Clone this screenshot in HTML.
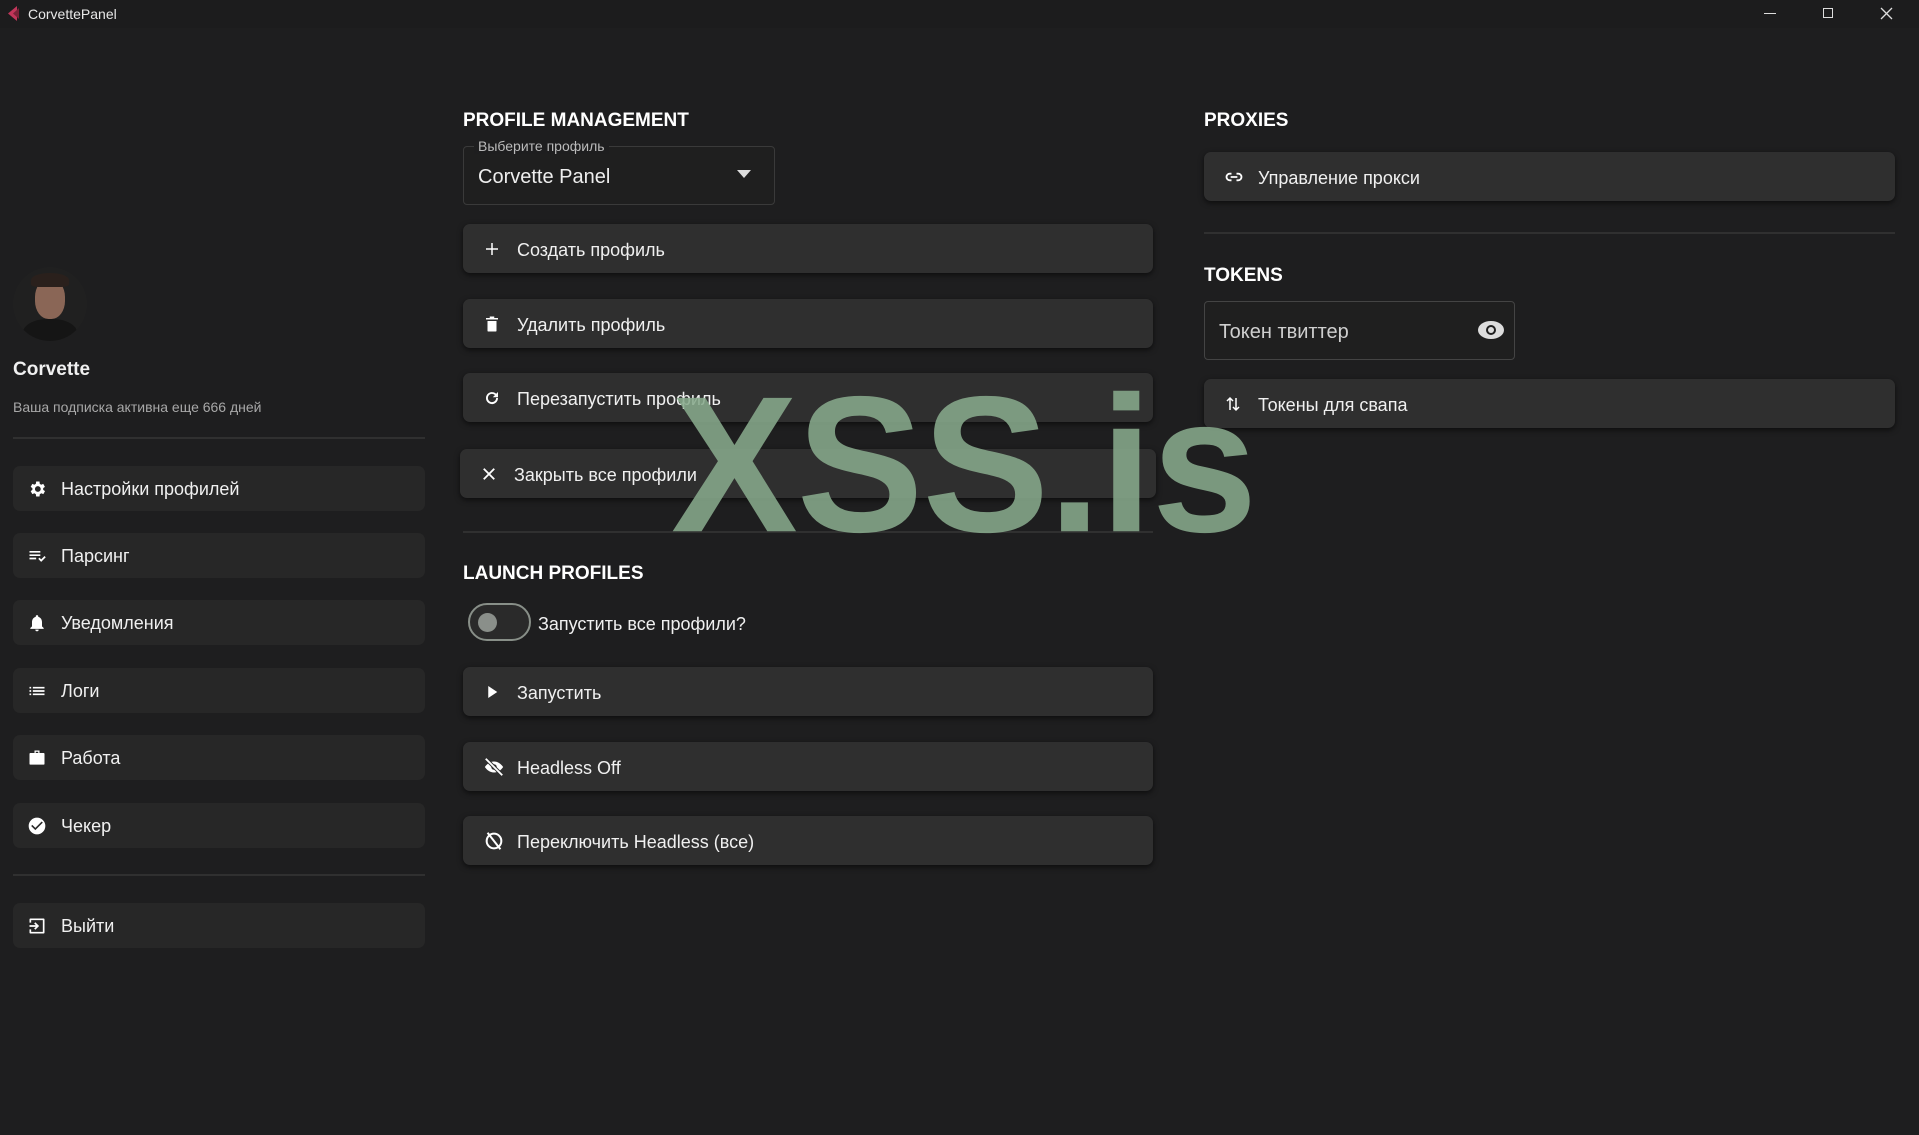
<!DOCTYPE html>
<html><head><meta charset="utf-8"><style>
*{box-sizing:border-box;margin:0;padding:0}
body{width:1919px;height:1135px;background:#1e1e1f;font-family:"Liberation Sans","DejaVu Sans",sans-serif;color:#f0f0f0;position:relative;overflow:hidden}
.tb{position:absolute;left:0;top:0;width:1919px;height:28px;background:#1c1c1d}
.tb .t{position:absolute;left:28px;top:6px;font-size:14px;color:#e8e8e8}
.abs{position:absolute}
.nav{position:absolute;left:13px;width:412px;height:45px;background:#272727;border-radius:7px;font-size:18px;display:flex;align-items:center}
.nav svg{position:absolute;left:14px}
.nav span{position:absolute;left:48px;top:13px}
.btn{position:absolute;height:49px;background:#2f2f2f;border-radius:7px;box-shadow:0 2px 6px rgba(0,0,0,.6);font-size:18px;display:flex;align-items:center}
.btn svg{position:absolute;left:20px}
.btn span{position:absolute;left:54px;top:16px}
.h{position:absolute;font-weight:bold;font-size:19px;color:#fff}
.hr{position:absolute;height:2px;background:#303030}
</style></head><body>
<div class="tb"><svg class="abs" style="left:5px;top:5px" width="16" height="17"><path d="M12 1 L3 8.5 L12 16 Z" fill="#c0365a"/><path d="M14 3 L8 8.5 L14 14 Z" fill="#7a2238"/></svg><div class="t">CorvettePanel</div>
<div class="abs" style="left:1764px;top:13px;width:12px;height:1px;background:#ddd"></div>
<div class="abs" style="left:1823px;top:8px;width:10px;height:10px;border:1px solid #ddd"></div>
<svg class="abs" style="left:1880px;top:7px" width="13" height="13"><path d="M1 1L12 12M12 1L1 12" stroke="#ddd" stroke-width="1.3"/></svg></div>

<!-- sidebar -->
<div class="abs" style="left:13px;top:267px;width:74px;height:74px;border-radius:50%;background:#202020;overflow:hidden">
<div class="abs" style="left:22px;top:12px;width:30px;height:40px;border-radius:45%;background:#8a6656"></div>
<div class="abs" style="left:18px;top:6px;width:38px;height:14px;border-radius:50% 50% 20% 20%;background:#2a201c"></div>
<div class="abs" style="left:10px;top:52px;width:54px;height:30px;border-radius:45%;background:#151515"></div>
</div>
<div class="abs" style="left:13px;top:359px;font-size:19px;font-weight:bold">Corvette</div>
<div class="abs" style="left:13px;top:399px;font-size:14px;color:#a8a8a8">Ваша подписка активна еще 666 дней</div>
<div class="hr" style="left:13px;top:437px;width:412px"></div>
<div class="nav" style="top:466px"><svg width="20" height="20" viewBox="0 0 24 24"><path fill="#fff" d="M19.4 13a7.5 7.5 0 0 0 0-2l2.1-1.6-2-3.5-2.5 1a7 7 0 0 0-1.7-1L15 3h-4l-.4 2.9a7 7 0 0 0-1.7 1l-2.5-1-2 3.5L6.5 11a7.5 7.5 0 0 0 0 2l-2.1 1.6 2 3.5 2.5-1a7 7 0 0 0 1.7 1L11 21h4l.4-2.9a7 7 0 0 0 1.7-1l2.5 1 2-3.5zM13 15.5a3.5 3.5 0 1 1 0-7 3.5 3.5 0 0 1 0 7z"/></svg><span>Настройки профилей</span></div>
<div class="nav" style="top:533px"><svg width="20" height="20" viewBox="0 0 24 24"><path fill="#fff" d="M3 6h13v2H3zm0 4h13v2H3zm0 4h8v2H3zm10.5 1.5l1.5-1.5 2 2 4-4 1.5 1.5-5.5 5.5z"/></svg><span>Парсинг</span></div>
<div class="nav" style="top:600px"><svg width="20" height="20" viewBox="0 0 24 24"><path fill="#fff" d="M12 22a2 2 0 0 0 2-2h-4a2 2 0 0 0 2 2zm6-6V11c0-3-1.6-5.6-4.5-6.3V4a1.5 1.5 0 0 0-3 0v.7C7.6 5.4 6 8 6 11v5l-2 2v1h16v-1z"/></svg><span>Уведомления</span></div>
<div class="nav" style="top:668px"><svg width="20" height="20" viewBox="0 0 24 24"><path fill="#fff" d="M3 7h2v2H3zm4 0h14v2H7zM3 11h2v2H3zm4 0h14v2H7zm-4 4h2v2H3zm4 0h14v2H7z"/></svg><span>Логи</span></div>
<div class="nav" style="top:735px"><svg width="20" height="20" viewBox="0 0 24 24"><path fill="#fff" d="M9 3h6v3h5a1 1 0 0 1 1 1v12a1 1 0 0 1-1 1H4a1 1 0 0 1-1-1V7a1 1 0 0 1 1-1h5zm1.5 1.5V6h3V4.5z"/></svg><span>Работа</span></div>
<div class="nav" style="top:803px"><svg width="20" height="20" viewBox="0 0 24 24"><path fill="#fff" d="M12 2a10 10 0 1 0 0 20 10 10 0 0 0 0-20zm-2 15-5-5 1.4-1.4 3.6 3.6 7.6-7.6L19 8z"/></svg><span>Чекер</span></div>
<div class="hr" style="left:13px;top:874px;width:412px"></div>
<div class="nav" style="top:903px"><svg width="20" height="20" viewBox="0 0 24 24"><path fill="#fff" d="M4 3h16a1 1 0 0 1 1 1v16a1 1 0 0 1-1 1H4a1 1 0 0 1-1-1v-4h2v3h14V5H5v3H3V4a1 1 0 0 1 1-1zm6 4.5L14.5 12 10 16.5 8.6 15l2-2H3v-2h7.6l-2-2z"/></svg><span>Выйти</span></div>

<!-- middle -->
<div class="h" style="left:463px;top:110px">PROFILE MANAGEMENT</div>
<div class="abs" style="left:463px;top:146px;width:312px;height:59px;border:1px solid #3a3a3a;border-radius:4px;background:#1f1f1f"></div>
<div class="abs" style="left:474px;top:138px;padding:0 4px;background:#1e1e1f;font-size:14px;color:#bbb">Выберите профиль</div>
<div class="abs" style="left:478px;top:166px;font-size:20px;color:#eee">Corvette Panel</div>
<svg class="abs" style="left:737px;top:170px" width="14" height="8"><path d="M0 0h14L7 8z" fill="#ddd"/></svg>

<div class="btn" style="left:463px;top:224px;width:690px"><svg width="18" height="18" viewBox="0 0 24 24"><path fill="#fff" d="M11 4h2v7h7v2h-7v7h-2v-7H4v-2h7z"/></svg><span>Создать профиль</span></div>
<div class="btn" style="left:463px;top:299px;width:690px"><svg width="18" height="18" viewBox="0 0 24 24"><path fill="#fff" d="M9 2h6v2h5v2H4V4h5zM6 8h12v13a1 1 0 0 1-1 1H7a1 1 0 0 1-1-1z"/></svg><span>Удалить профиль</span></div>
<div class="btn" style="left:463px;top:373px;width:690px"><svg width="18" height="18" viewBox="0 0 24 24"><path fill="#fff" d="M17.6 6.4A8 8 0 1 0 20 12h-2.5a5.5 5.5 0 1 1-1.6-3.9L13 11h7V4z"/></svg><span>Перезапустить профиль</span></div>
<div class="btn" style="left:460px;top:449px;width:696px"><svg width="18" height="18" viewBox="0 0 24 24"><path d="M5 5l14 14M19 5L5 19" stroke="#fff" stroke-width="2.4"/></svg><span>Закрыть все профили</span></div>
<div class="hr" style="left:463px;top:531px;width:690px"></div>
<div class="h" style="left:463px;top:563px">LAUNCH PROFILES</div>
<div class="abs" style="left:468px;top:603px;width:63px;height:38px;border:2px solid #888f88;border-radius:19px;background:#2a2a2a"></div>
<div class="abs" style="left:478px;top:613px;width:19px;height:19px;border-radius:50%;background:#8a8f8a"></div>
<div class="abs" style="left:538px;top:614px;font-size:18px">Запустить все профили?</div>
<div class="btn" style="left:463px;top:667px;width:690px"><svg width="18" height="18" viewBox="0 0 24 24"><path fill="#fff" d="M7 4l12 8-12 8z"/></svg><span>Запустить</span></div>
<div class="btn" style="left:463px;top:742px;width:690px"><svg width="22" height="22" viewBox="0 0 24 24"><path fill="#fff" d="M12 6c4.5 0 8 3 10 6-2 3-5.5 6-10 6S4 15 2 12c2-3 5.5-6 10-6zm0 3a3 3 0 1 0 0 6 3 3 0 0 0 0-6z"/><path d="M3 3l18 18" stroke="#2f2f2f" stroke-width="4"/><path d="M3 3l18 18" stroke="#fff" stroke-width="2"/></svg><span>Headless Off</span></div>
<div class="btn" style="left:463px;top:816px;width:690px"><svg width="22" height="22" viewBox="0 0 24 24"><circle cx="12" cy="12" r="8" fill="none" stroke="#fff" stroke-width="2.2"/><path d="M5 3l14 18" stroke="#fff" stroke-width="2.2"/></svg><span>Переключить Headless (все)</span></div>

<!-- right -->
<div class="h" style="left:1204px;top:110px">PROXIES</div>
<div class="btn" style="left:1204px;top:152px;width:691px"><svg width="20" height="20" viewBox="0 0 24 24"><path d="M9 8H7a4 4 0 0 0 0 8h2M15 8h2a4 4 0 0 1 0 8h-2M8 12h8" stroke="#fff" stroke-width="2.2" fill="none"/></svg><span>Управление прокси</span></div>
<div class="hr" style="left:1204px;top:232px;width:691px"></div>
<div class="h" style="left:1204px;top:265px">TOKENS</div>
<div class="abs" style="left:1204px;top:301px;width:311px;height:59px;border:1px solid #444;border-radius:4px;background:#1f1f1f"></div>
<div class="abs" style="left:1219px;top:321px;font-size:20px;color:#cfcfcf">Токен твиттер</div>
<svg class="abs" style="left:1477px;top:319px" width="28" height="22" viewBox="0 0 28 22"><ellipse cx="14" cy="11" rx="13" ry="9" fill="#ddd"/><circle cx="14" cy="11" r="5" fill="#1f1f1f"/><circle cx="14" cy="11" r="3" fill="#ddd"/></svg>
<div class="btn" style="left:1204px;top:379px;width:691px"><svg width="18" height="20" viewBox="0 0 24 24"><path d="M8 20V4M4 8l4-4 4 4M16 4v16M12 16l4 4 4-4" stroke="#fff" stroke-width="2" fill="none"/></svg><span>Токены для свапа</span></div>

<div class="abs" style="left:671px;top:368px;font-family:'Liberation Sans',Arial,sans-serif;font-weight:bold;font-size:190px;line-height:1;color:rgba(135,170,140,0.88);transform:scaleY(1.02);transform-origin:top left;letter-spacing:-1px">XSS.is</div>
</body></html>
